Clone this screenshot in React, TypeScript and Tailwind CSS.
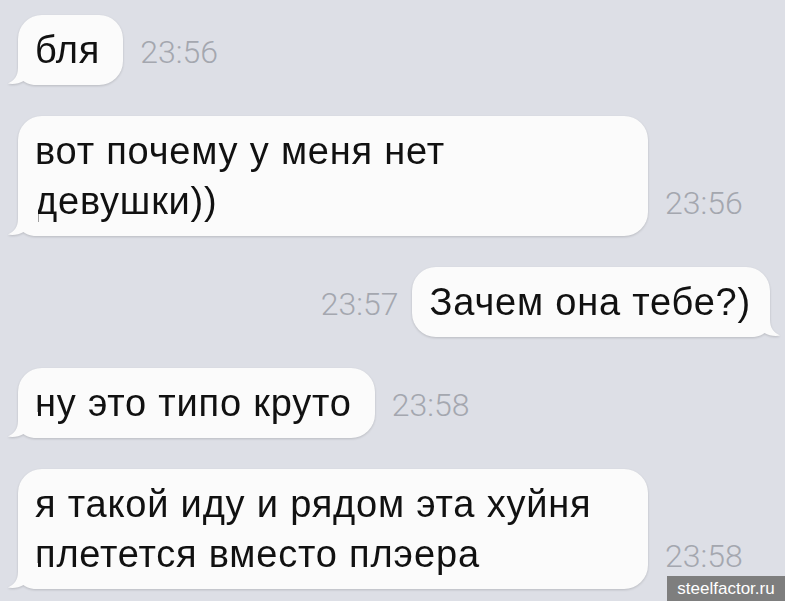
import React from "react";

type Msg = {
  lines: string[];
  time: string;
  out?: boolean;
  wide?: boolean;
};

const messages: Msg[] = [
  { lines: ["бля"], time: "23:56" },
  { lines: ["вот почему у меня нет", "девушки))"], time: "23:56", wide: true },
  { lines: ["Зачем она тебе?)"], time: "23:57", out: true },
  { lines: ["ну это типо круто"], time: "23:58" },
  { lines: ["я такой иду и рядом эта хуйня", "плетется вместо плэера"], time: "23:58", wide: true },
];

const Tail = ({ out }: { out?: boolean }) => (
  <svg
    width="30"
    height="26"
    viewBox="0 0 30 26"
    className={
      out
        ? "absolute right-[-10px] bottom-0 -scale-x-100"
        : "absolute left-[-10px] bottom-0"
    }
  >
    <path
      d="M10 0 L10 9 C10 17 6 21.5 0 24.5 C5 25.6 11 24.6 15.5 22 C19 24.6 23 26 30 26 L30 0 Z"
      fill="#fbfbfb"
    />
  </svg>
);

const Time = ({ value }: { value: string }) => (
  <span className="mb-[17px] shrink-0 font-['Roboto',sans-serif] text-[32px] font-light leading-none text-[#a4a7af]">
    {value}
  </span>
);

const Bubble = ({ msg }: { msg: Msg }) => (
  <div className="relative drop-shadow-[0_1px_1px_rgba(0,0,0,0.16)]">
    <div
      className={`relative bg-[#fbfbfb] py-[10px] text-[38px] leading-[50px] tracking-[0.8px] text-[#111] ${
        msg.out
          ? "rounded-[24px] rounded-br-[20px] pl-[18px] pr-[19px]"
          : "rounded-[24px] rounded-bl-[20px] pl-[17px] pr-[23px]"
      } ${msg.wide ? "w-[630px]" : ""}`}
    >
      {msg.lines.map((line, i) => (
        <div key={i} className="whitespace-nowrap">
          {line}
        </div>
      ))}
    </div>
    <Tail out={msg.out} />
  </div>
);

const App = () => {
  return (
    <div className="relative h-[601px] w-[785px] overflow-hidden bg-[#dddfe6] font-['Liberation_Sans',Arial,sans-serif]">
      <div className="flex flex-col gap-[31px] pl-[18px] pr-[15px] pt-[15px]">
        {messages.map((msg, i) =>
          msg.out ? (
            <div key={i} className="flex items-end justify-end gap-[13px]">
              <Time value={msg.time} />
              <Bubble msg={msg} />
            </div>
          ) : (
            <div key={i} className="flex items-end gap-[17px]">
              <Bubble msg={msg} />
              <Time value={msg.time} />
            </div>
          )
        )}
      </div>
      <div className="absolute bottom-0 right-0 flex h-[25px] w-[118px] items-center justify-center bg-[#7e7e7e] text-[17px] text-white">
        steelfactor.ru
      </div>
    </div>
  );
};

export default App;
